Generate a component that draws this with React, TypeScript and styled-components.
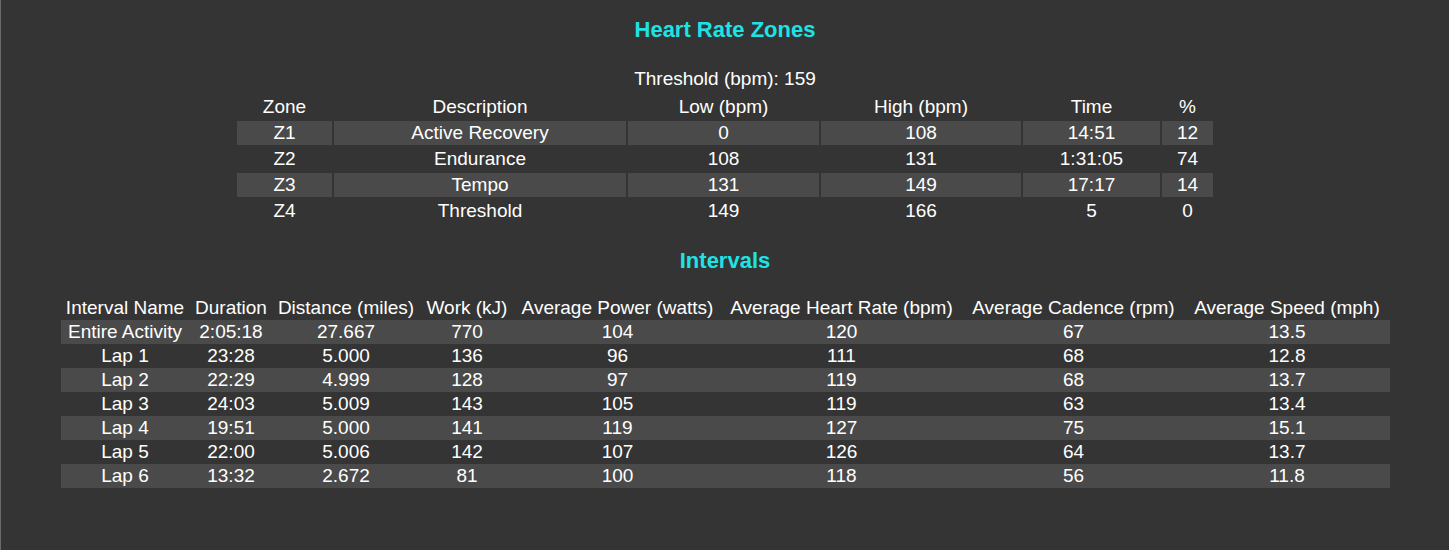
import React from 'react'
import styled, { createGlobalStyle } from 'styled-components'

type Zone = { zone: string; description: string; low: number; high: number; time: string; pct: number }
type Interval = {
  name: string
  duration: string
  distance: string
  work: number
  power: number
  heartRate: number
  cadence: number
  speed: string
}

const zones: Zone[] = [
  { zone: 'Z1', description: 'Active Recovery', low: 0, high: 108, time: '14:51', pct: 12 },
  { zone: 'Z2', description: 'Endurance', low: 108, high: 131, time: '1:31:05', pct: 74 },
  { zone: 'Z3', description: 'Tempo', low: 131, high: 149, time: '17:17', pct: 14 },
  { zone: 'Z4', description: 'Threshold', low: 149, high: 166, time: '5', pct: 0 }
]

const intervals: Interval[] = [
  { name: 'Entire Activity', duration: '2:05:18', distance: '27.667', work: 770, power: 104, heartRate: 120, cadence: 67, speed: '13.5' },
  { name: 'Lap 1', duration: '23:28', distance: '5.000', work: 136, power: 96, heartRate: 111, cadence: 68, speed: '12.8' },
  { name: 'Lap 2', duration: '22:29', distance: '4.999', work: 128, power: 97, heartRate: 119, cadence: 68, speed: '13.7' },
  { name: 'Lap 3', duration: '24:03', distance: '5.009', work: 143, power: 105, heartRate: 119, cadence: 63, speed: '13.4' },
  { name: 'Lap 4', duration: '19:51', distance: '5.000', work: 141, power: 119, heartRate: 127, cadence: 75, speed: '15.1' },
  { name: 'Lap 5', duration: '22:00', distance: '5.006', work: 142, power: 107, heartRate: 126, cadence: 64, speed: '13.7' },
  { name: 'Lap 6', duration: '13:32', distance: '2.672', work: 81, power: 100, heartRate: 118, cadence: 56, speed: '11.8' }
]

const zoneCols = [95, 292, 191, 200, 137, 51]
const intervalCols = [129, 83, 147, 95, 206, 242, 222, 205]

const intervalHeaders = [
  'Interval Name',
  'Duration',
  'Distance (miles)',
  'Work (kJ)',
  'Average Power (watts)',
  'Average Heart Rate (bpm)',
  'Average Cadence (rpm)',
  'Average Speed (mph)'
]

export default function App(): JSX.Element {
  return (
    <>
      <GlobalStyle />
      <Page>
        <Title>Heart Rate Zones</Title>
        <Threshold>Threshold (bpm): 159</Threshold>
        <ZoneTable>
          <colgroup>
            {zoneCols.map((w, i) => (
              <col key={i} style={{ width: w }} />
            ))}
          </colgroup>
          <thead>
            <tr>
              <Th>Zone</Th>
              <Th>Description</Th>
              <Th>Low (bpm)</Th>
              <Th>High (bpm)</Th>
              <Th>Time</Th>
              <Th>%</Th>
            </tr>
          </thead>
          <tbody>
            {zones.map((z, i) => (
              <tr key={z.zone}>
                <Td $shaded={i % 2 === 0}>{z.zone}</Td>
                <Td $shaded={i % 2 === 0}>{z.description}</Td>
                <Td $shaded={i % 2 === 0}>{z.low}</Td>
                <Td $shaded={i % 2 === 0}>{z.high}</Td>
                <Td $shaded={i % 2 === 0}>{z.time}</Td>
                <Td $shaded={i % 2 === 0}>{z.pct}</Td>
              </tr>
            ))}
          </tbody>
        </ZoneTable>

        <IntervalsTitle>Intervals</IntervalsTitle>
        <IntervalTable>
          <colgroup>
            {intervalCols.map((w, i) => (
              <col key={i} style={{ width: w }} />
            ))}
          </colgroup>
          <thead>
            <tr>
              {intervalHeaders.map((h) => (
                <Th key={h}>{h}</Th>
              ))}
            </tr>
          </thead>
          <tbody>
            {intervals.map((row, i) => (
              <IntervalRow key={row.name} $shaded={i % 2 === 0}>
                <Td>{row.name}</Td>
                <Td>{row.duration}</Td>
                <Td>{row.distance}</Td>
                <Td>{row.work}</Td>
                <Td>{row.power}</Td>
                <Td>{row.heartRate}</Td>
                <Td>{row.cadence}</Td>
                <Td>{row.speed}</Td>
              </IntervalRow>
            ))}
          </tbody>
        </IntervalTable>
      </Page>
    </>
  )
}

const GlobalStyle = createGlobalStyle`
  html, body {
    margin: 0;
    padding: 0;
    background: #343434;
  }
`

const Page = styled.div`
  box-sizing: border-box;
  min-height: 550px;
  padding-top: 17px;
  border-left: 1px solid #6a6a6a;
  background: #343434;
  color: #ffffff;
  font-family: 'Liberation Sans', Arial, sans-serif;
  font-size: 19px;
  display: flex;
  flex-direction: column;
  align-items: center;
`

const Title = styled.h2`
  margin: 0;
  color: #1ee3e6;
  font-size: 22px;
  font-weight: bold;
  line-height: normal;
`

const IntervalsTitle = styled(Title)`
  margin-top: 23px;
  margin-bottom: 22px;
`

const Threshold = styled.div`
  margin-top: 25px;
  margin-bottom: 3px;
  line-height: 22px;
`

const ZoneTable = styled.table`
  table-layout: fixed;
  border-spacing: 2px;
  width: 980px;
  font-size: 19px;
  color: #ffffff;
`

const IntervalTable = styled.table`
  table-layout: fixed;
  border-collapse: collapse;
  width: 1329px;
  font-size: 19px;
  color: #ffffff;
`

const Th = styled.th`
  padding: 1px;
  height: 22px;
  line-height: 22px;
  font-weight: normal;
  text-align: center;
  white-space: nowrap;
`

const Td = styled.td<{ $shaded?: boolean }>`
  padding: 1px;
  height: 22px;
  line-height: 22px;
  text-align: center;
  white-space: nowrap;
  background: ${(p) => (p.$shaded ? '#4a4a4a' : 'transparent')};
`

const IntervalRow = styled.tr<{ $shaded: boolean }>`
  background: ${(p) => (p.$shaded ? '#4a4a4a' : 'transparent')};
`
